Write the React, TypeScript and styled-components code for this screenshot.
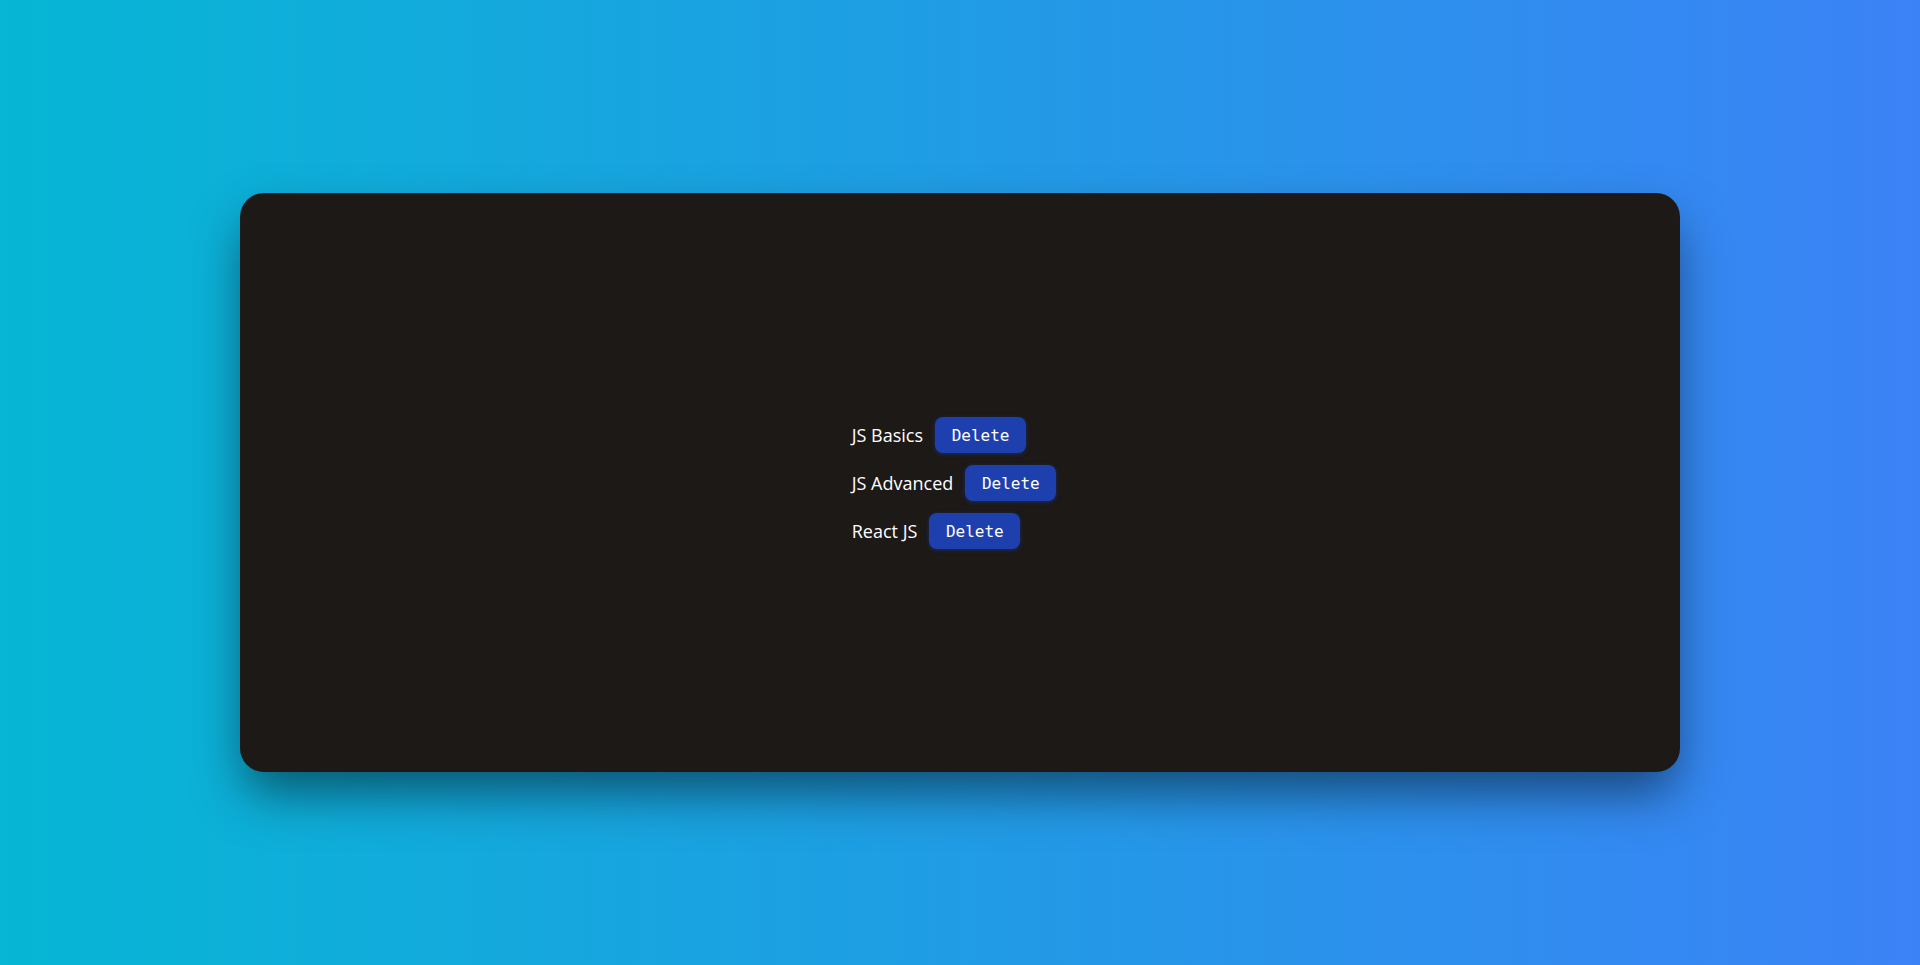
import React, { useState } from "react";
import styled, { createGlobalStyle } from "styled-components";

const GlobalStyle = createGlobalStyle`
  *, *::before, *::after { box-sizing: border-box; }
  body { margin: 0; }
`;

const Page = styled.main`
  display: flex;
  align-items: center;
  justify-content: center;
  min-height: 100vh;
  background: linear-gradient(to right, #06b6d4, #3b82f6);
  font-family: "Segoe UI", "Open Sans", "Noto Sans", sans-serif;
  font-size: 18px;
  line-height: 24px;
  color: #fff;
`;

const Card = styled.section`
  display: flex;
  align-items: center;
  justify-content: center;
  width: 75%;
  min-height: 60vh;
  border-radius: 24px;
  background: #1c1917;
  box-shadow: 0 25px 50px -5px rgba(0, 0, 0, 0.5);
`;

const CourseList = styled.ul`
  margin: 0;
  padding: 0;
  list-style: none;
`;

const CourseItem = styled.li`
  display: flex;
  align-items: center;
  gap: 12px;
  padding: 6px 12px 6px 0;
`;

const DeleteButton = styled.button`
  min-width: 91px;
  padding: 7px 16px 5px;
  border: 0;
  border-radius: 8px;
  background: #1e40af;
  color: #fff;
  font-family: Consolas, "DejaVu Sans Mono", monospace;
  font-size: 16px;
  line-height: 24px;
  cursor: pointer;
  box-shadow: 0 1px 4px rgba(30, 64, 175, 0.5);
`;

const initialCourses = ["JS Basics", "JS Advanced", "React JS"];

export default function App() {
  const [courses, setCourses] = useState<string[]>(initialCourses);
  return (
    <Page>
      <GlobalStyle />
      <Card>
        <CourseList>
          {courses.map((course) => (
            <CourseItem key={course}>
              <span>{course}</span>
              <DeleteButton
                type="button"
                onClick={() => setCourses(courses.filter((c) => c !== course))}
              >
                Delete
              </DeleteButton>
            </CourseItem>
          ))}
        </CourseList>
      </Card>
    </Page>
  );
}
